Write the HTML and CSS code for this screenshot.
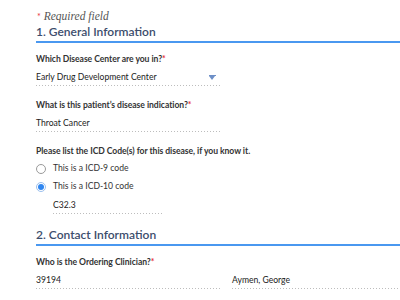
FILE: index.html
```
<!DOCTYPE html>
<html>
<head>
<meta charset="utf-8">
<link rel="stylesheet" href="styles.css">
</head>
<body>
<div class="form">
  <div class="req"><span class="star">*</span> Required field</div>
  <h2 class="section">1. General Information</h2>

  <div class="field first">
    <div class="label">Which Disease Center are you in?<span class="star">*</span></div>
    <div class="input select">Early Drug Development Center<span class="caret"></span></div>
  </div>

  <div class="field">
    <div class="label">What is this patient’s disease indication?<span class="star">*</span></div>
    <div class="input">Throat Cancer</div>
  </div>

  <div class="field">
    <div class="label">Please list the ICD Code(s) for this disease, if you know it.</div>
    <div class="radios">
      <div class="radio"><span class="dot"></span>This is a ICD-9 code</div>
      <div class="radio"><span class="dot on"></span>This is a ICD-10 code</div>
    </div>
    <div class="input short">C32.3</div>
  </div>

  <h2 class="section s2">2. Contact Information</h2>

  <div class="field first">
    <div class="label">Who is the Ordering Clinician?<span class="star">*</span></div>
    <div class="row">
      <div class="input">39194</div>
      <div class="input wide">Aymen, George</div>
    </div>
  </div>
</div>
</body>
</html>
```
FILE: styles.css
```
html, body { margin: 0; padding: 0; background: #fff; }
body { font-family: Lato, "Open Sans", sans-serif; color: #333; overflow: hidden; }
.form { padding: 9px 0 0 36px; width: 364px; }
.req { font-family: "Liberation Serif", serif; font-style: italic; font-size: 11.5px; color: #555; height: 14px; line-height: 14px; padding-left: 1px; }
.star { color: #e8313a; font-style: normal; }
.req .star { font-family: Lato, sans-serif; font-size: 9px; }
.section { margin: 2px 0 0 0; font-size: 12px; font-weight: 600; color: #3c4d6c; line-height: 14px; padding-bottom: 2px; border-bottom: 2px solid #4a98f0; }
.s2 { margin-top: 14px; }
.field { margin-top: 13px; }
.field.first { margin-top: 10px; }
.label { font-size: 8.6px; font-weight: 700; color: #333; line-height: 12px; letter-spacing: -0.05px; }
.input { margin-top: 6px; width: 186px; font-size: 8.6px; color: #222; line-height: 12px; padding-bottom: 3px; background: linear-gradient(to right, #bdbdbd 1px, transparent 1px) left bottom / 3px 1px repeat-x; position: relative; }
.select .caret { position: absolute; right: 7px; top: 5px; width: 0; height: 0; border-left: 3.5px solid transparent; border-right: 3.5px solid transparent; border-top: 4px solid #6d8fc7; }
.select .caret::before { content: ""; position: absolute; left: -3.5px; top: -5px; width: 7px; height: 1px; background: #6d8fc7; }
.radios { margin-top: 6px; display: flex; flex-direction: column; gap: 7px; }
.radio { display: flex; align-items: center; gap: 7px; font-size: 8.6px; color: #333; line-height: 11px; }
.dot { width: 10px; height: 10px; border: 1px solid #9a9a9a; border-radius: 50%; box-sizing: border-box; display: inline-flex; align-items: center; justify-content: center; }
.dot.on { border-color: #9cc0ee; }
.dot.on::after { content: ""; width: 6px; height: 6px; border-radius: 50%; background: #2f86f0; }
.short { margin-left: 17px; margin-top: 7px; width: 110px; }
.row { display: flex; gap: 10px; }
.wide { width: auto; flex: 1; }
```
